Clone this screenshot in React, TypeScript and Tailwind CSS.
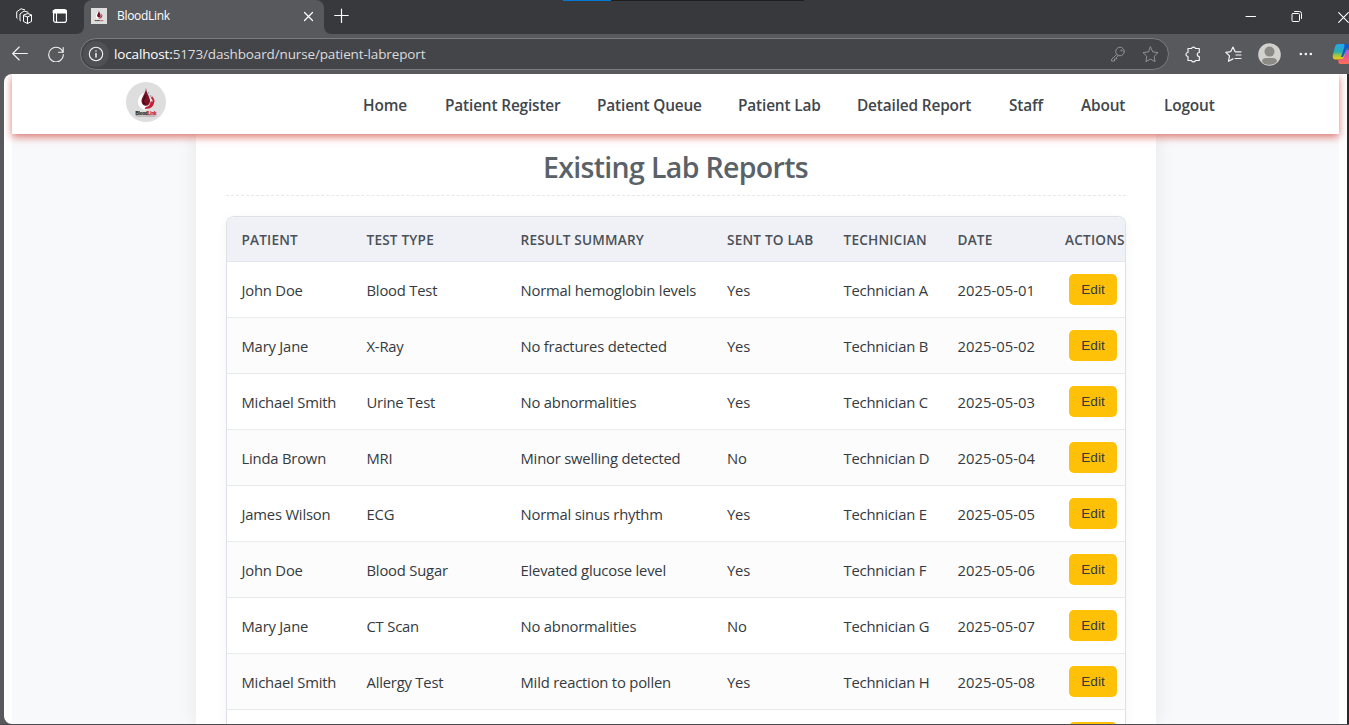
import type { ReactNode } from 'react';

const stroke = { fill: 'none', stroke: 'currentColor', strokeLinecap: 'round', strokeLinejoin: 'round' } as const;

function Drop({ className }: { className: string }) {
  return (
    <svg viewBox="0 0 40 40" className={className}>
      <rect width="40" height="40" fill="#dedede" />
      <path d="M17.500 11c-6 3-7.500 11-2.500 15 2.500 2 6.500 2 8.500 0-5.500-1-7.500-8-6-15Z" fill="#fff" />
      <path d="M20 5.500c0 5 4 9.500 4 13.500 0 3-1.800 4.800-4.200 4.800s-4.300-1.800-4.300-4.800c0-4 4.500-7.500 4.500-13.500Z" fill="#7c1226" />
      <path d="M19.300 13c.3 3-2.200 4-2 6.500.1 1.500 1 2.500 2.300 2.700" fill="none" stroke="#35101c" strokeWidth="1.300" />
      <path d="M24.500 19.500H28c.5 4-3 7.800-9.300 7.500l1-2c3.500-.3 4.600-2.500 4.800-5.500Z" fill="#c51f35" />
      <path d="M25.500 15c1.500 1.500 2.300 3 2.200 5" fill="none" stroke="#c51f35" strokeWidth="1.800" />
      <circle cx="22.500" cy="11" r=".9" fill="#9ab0bd" />
      <circle cx="24.500" cy="14" r=".9" fill="#9ab0bd" />
      <text x="9.500" y="32.700" fontFamily="Liberation Sans, sans-serif" fontWeight="700" fontSize="5" textLength="21" lengthAdjust="spacingAndGlyphs" fill="#222" stroke="#222" strokeWidth=".25">
        Blood<tspan fill="#c51f35" stroke="#c51f35">Link</tspan>
      </text>
      <path d="M10.500 34.200h19" stroke="#999" strokeWidth=".7" />
    </svg>
  );
}

function Icon({ children, className, size = 16 }: { children: ReactNode; className?: string; size?: number }) {
  return (
    <svg width={size} height={size} viewBox={`0 0 ${size} ${size}`} className={`shrink-0 ${className ?? ''}`} {...stroke}>
      {children}
    </svg>
  );
}

function TabStrip() {
  return (
    <div className="relative flex h-[34px] shrink-0 bg-[#38393c] text-white">
      <div className="absolute top-0 left-[563px] flex h-px w-[241px] bg-[#1e1e1e]">
        <div className="w-12 bg-[#0078d4]" />
      </div>
      <div className="flex w-[76px] pt-2 pl-4">
        <Icon size={17}>
          <path d="M7.500 8.500v5l4 2 4-2V7l-3.500-1.500L7.500 7v1.500Zm0-1 4 1.500 4-2M11.500 9v6.500M4.500 12.800 4 12.500V6l4-3 4 1.200M1.200 10.500.7 10V3.800L5 .8l3.700 1" strokeWidth="1" />
        </Icon>
        <Icon className="ml-[19px]">
          <rect x="1.600" y="1.600" width="12.800" height="12.800" rx="2.200" strokeWidth="1.200" />
          <path d="M1.500 2.500h13v2.500h-13Z" fill="currentColor" strokeWidth="1" />
          <path d="M4.500 5v9" strokeWidth="1.100" />
        </Icon>
      </div>
      <svg width="8" height="34" viewBox="0 0 8 34"><path d="M8 26v8H0c5 0 8-3 8-8Z" fill="#58595d" /></svg>
      <div className="flex w-60 items-center rounded-t-lg bg-[#58595d] pr-2.5 pb-0.5 pl-[7px]">
        <Drop className="size-4" />
        <span className="ml-2.5 flex-1 font-['Open_Sans','Noto_Sans',sans-serif] text-[12px] tracking-[-0.3px]">BloodLink</span>
        <Icon size={11}><path d="m1.500 1.500 8 8m0-8-8 8" strokeWidth="1.200" /></Icon>
      </div>
      <svg width="8" height="34" viewBox="0 0 8 34"><path d="M0 26v8h8c-5 0-8-3-8-8Z" fill="#58595d" /></svg>
      <Icon className="mt-2 ml-0.5" size={16}><path d="M7.500 1v13.500M.7 7.500h13.500" strokeWidth="1.200" /></Icon>
      <div className="ml-auto flex items-center">
        <Icon className="mr-[35px]" size={11}><path d="M1 4.500h9.500" /></Icon>
        <Icon className="mr-[35px]" size={12}>
          <rect x="1" y="2.500" width="7.500" height="8" rx="1" />
          <path d="M3.500.5H8.500a2 2 0 0 1 2 2V7.500" />
        </Icon>
        <Icon size={11}><path d="m.7.700 9.600 9.600m0-9.600L.7 10.300" strokeWidth="1.100" /></Icon>
      </div>
    </div>
  );
}

function Toolbar() {
  return (
    <div className="flex h-10 shrink-0 items-center overflow-hidden bg-[#58595d] pl-3 text-[#f2f2f2]">
      <Icon><path d="M15.400 7.500H.7M7.200 1 .7 7.500 7.200 14" strokeWidth="1.100" /></Icon>
      <Icon className="ml-5"><path d="M15 6.500A7.300 7.300 0 1 0 15.300 8.500M15.200 1.500v4.800h-4.700" strokeWidth="1.100" /></Icon>
      <div className="ml-4 flex h-8 w-[1089px] shrink-0 items-center rounded-full border border-[#7c7c7f] bg-[#444549] pl-0.5">
        <div className="flex size-[26px] items-center justify-center rounded-full bg-[#505155]">
          <Icon>
            <circle cx="8" cy="8" r="6.700" strokeWidth="1.100" />
            <path d="M8 7.500V11M8 5v.1" strokeWidth="1.500" />
          </Icon>
        </div>
        <span className="ml-[5px] font-['Open_Sans','Noto_Sans',sans-serif] text-[13.500px] tracking-[-0.14px] whitespace-nowrap text-[#dcdcdd]">
          <span className="text-white">localhost:</span>5173/dashboard/nurse/patient-labreport
        </span>
        <Icon className="ml-auto text-[#929295]">
          <circle cx="10" cy="5.500" r="4.300" />
          <circle cx="11.400" cy="4.500" r=".5" />
          <path d="m6.500 8.500-5 5V15h3v-2h2v-1.500l1.500-1.800" />
        </Icon>
        <Icon className="mr-[9px] ml-4 text-[#929295]" size={17}>
          <path d="m8.500 1 2.300 4.900 5.200.7-3.800 3.700.9 5.300-4.600-2.500-4.600 2.500.9-5.300L1 6.600l5.200-.7Z" />
        </Icon>
      </div>
      <Icon className="ml-4" size={17}>
        <path d="M4 2.500h2.500a2.100 2.100 0 0 1 4 0h3.800v4a2 2 0 0 0 0 4v4h-3.800a2.100 2.100 0 0 1-4 0H3v-4a2 2 0 0 1 0-4v-4h1" strokeWidth="1.200" />
      </Icon>
      <div className="ml-[11px] h-4 w-px bg-[#818184]" />
      <Icon className="ml-3" size={17}>
        <path d="M11 5.800 10 5.600 8 1 5.800 5.600.8 6.300l3.700 3.600-1 5.400 4.500-2.400M11 9h5M10 12.500h6M11 5.800h5" strokeWidth="1.200" />
      </Icon>
      <svg width="23" height="23" viewBox="0 0 23 23" className="ml-4 shrink-0">
        <circle cx="11.500" cy="11.500" r="11.300" fill="#d3d1ce" />
        <circle cx="11.500" cy="8.600" r="5" fill="#8d8a86" />
        <path d="M4 18.700c0-2.600 2-3.700 4-3.700h7c2 0 4 1.100 4 3.700a10.500 10.500 0 0 1-15 0Z" fill="#8d8a86" />
      </svg>
      <Icon className="ml-[17px]"><path d="M2.800 8h.1M7.800 8h.1M12.800 8h.1" strokeWidth="2.500" /></Icon>
      <svg width="22" height="22" viewBox="0 0 22 22" className="ml-[18px] shrink-0">
        <defs>
          <linearGradient id="cool" x1="0" y1="0" x2="0" y2="1">
            <stop offset="0" stopColor="#20a8f5" /><stop offset=".5" stopColor="#2aaeb0" /><stop offset=".75" stopColor="#a5c936" /><stop offset="1" stopColor="#f6c514" />
          </linearGradient>
          <linearGradient id="warm" x1="0" y1="0" x2="0" y2="1">
            <stop offset="0" stopColor="#a75bf3" /><stop offset=".5" stopColor="#ed5596" /><stop offset="1" stopColor="#ff7050" />
          </linearGradient>
        </defs>
        <path d="M6 1h7c3 0 3 2 2.500 4L12 15c-.7 1.500-1.500 1.500-3 1.500H4c-3 0-3.700-2-3-5L3 4c.7-2 1.500-3 3-3Z" fill="url(#cool)" />
        <path d="M12 1h3c2 0 2 3 3 4h-3l-4 9H9l3-9c.7-2 .5-3 0-4Z" fill="#1559c7" />
        <path d="M14.500 7H19c3 0 3 2 2 5l-2 5c-1 3-2 4-4 4H8c-1.500 0-2-2-1.500-4.500H9c1.500 0 2.500-1 3-2.500Z" fill="url(#warm)" />
      </svg>
    </div>
  );
}

const links = [
  { label: 'Home', box: 'w-[82px]' },
  { label: 'Patient Register', box: 'w-[152px]' },
  { label: 'Patient Queue', box: 'w-[141px]' },
  { label: 'Patient Lab', box: 'w-[119px]' },
  { label: 'Detailed Report', box: 'w-[152px]' },
  { label: 'Staff', box: 'w-[72px]' },
  { label: 'About', box: 'w-[83px]' },
  { label: 'Logout', box: 'w-[52px]' },
];

const columns = ['Patient', 'Test Type', 'Result Summary', 'Sent to Lab', 'Technician', 'Date', 'Actions'];

const reports = [
  ['John Doe', 'Blood Test', 'Normal hemoglobin levels', 'Yes', 'Technician A', '2025-05-01'],
  ['Mary Jane', 'X-Ray', 'No fractures detected', 'Yes', 'Technician B', '2025-05-02'],
  ['Michael Smith', 'Urine Test', 'No abnormalities', 'Yes', 'Technician C', '2025-05-03'],
  ['Linda Brown', 'MRI', 'Minor swelling detected', 'No', 'Technician D', '2025-05-04'],
  ['James Wilson', 'ECG', 'Normal sinus rhythm', 'Yes', 'Technician E', '2025-05-05'],
  ['John Doe', 'Blood Sugar', 'Elevated glucose level', 'Yes', 'Technician F', '2025-05-06'],
  ['Mary Jane', 'CT Scan', 'No abnormalities', 'No', 'Technician G', '2025-05-07'],
  ['Michael Smith', 'Allergy Test', 'Mild reaction to pollen', 'Yes', 'Technician H', '2025-05-08'],
  ['', '', '', '', '', ''],
];

const grid = 'grid grid-cols-[125px_154px_206.500px_116.500px_114px_107.500px_76px] items-center pl-[14.500px] whitespace-nowrap';

export default function App() {
  return (
    <div className="flex h-[725px] w-full flex-col overflow-hidden bg-[#58595d] font-['Open_Sans','Noto_Sans',sans-serif]">
      <TabStrip />
      <Toolbar />
      <div className="flex min-h-0 flex-1 border-b border-[#4c4a50] bg-[linear-gradient(to_right,#58595d_50%,#29292c_50%)] pr-0.5 pl-1">
        <div className="flex min-w-0 flex-1 flex-col overflow-hidden rounded-l-lg bg-white px-2">
          <nav className="relative z-10 flex h-[60px] shrink-0 bg-white pl-[114px] shadow-[0_3px_8px_rgba(203,50,40,0.65)]">
            <Drop className="mt-2 size-10 rounded-full" />
            <div className="ml-[197px] flex items-center pt-1 text-[15.400px] font-[580] tracking-[-0.16px] whitespace-nowrap text-[#41464b]">
              {links.map((l) => (
                <a key={l.label} className={l.box}>{l.label}</a>
              ))}
            </div>
          </nav>
          <main className="min-h-0 flex-1 overflow-hidden bg-[#f8f9fb]">
            <section className="ml-[184px] h-full w-[960px] bg-white px-[30px] pt-[13px] shadow-[0_0_20px_rgba(0,0,0,0.08)]">
              <h2 className="h-[49px] border-b border-dashed border-[#e6e8ea] pr-px text-center text-[28.500px] leading-[41px] font-[560] tracking-[-0.66px] text-[#5a6268]">
                Existing Lab Reports
              </h2>
              <div className="mt-5 overflow-hidden rounded-t-lg border border-b-0 border-[#dee2e6] shadow-[0_2px_10px_rgba(0,0,0,0.05)]">
                <div className={`${grid} h-[45px] border-b border-[#e3e6ea] bg-[#f0f1f6] pt-0.5 text-[13.600px] font-[560] tracking-[0.2px] text-[#495057] uppercase`}>
                  {columns.map((c) => <span key={c}>{c}</span>)}
                </div>
                {reports.map((r, i) => (
                  <div key={i} className={`${grid} h-14 border-b border-[#e9ebed] text-[14.800px] tracking-[-0.2px] text-[#343a40] ${i % 2 ? 'bg-[#fcfcfc]' : 'bg-white'}`}>
                    {r.map((v, j) => <span key={j} className={j === 5 ? 'pt-0.5 tracking-[0.03px]' : 'pt-0.5'}>{v}</span>)}
                    <button className="ml-[3.500px] h-[31px] w-12 rounded-[5px] bg-[#ffc107] pt-px pl-px font-['Liberation_Sans',Arial,sans-serif] text-[13.600px] tracking-normal text-[#343a40]">
                      {r[0] && 'Edit'}
                    </button>
                  </div>
                ))}
              </div>
            </section>
          </main>
        </div>
      </div>
    </div>
  );
}
